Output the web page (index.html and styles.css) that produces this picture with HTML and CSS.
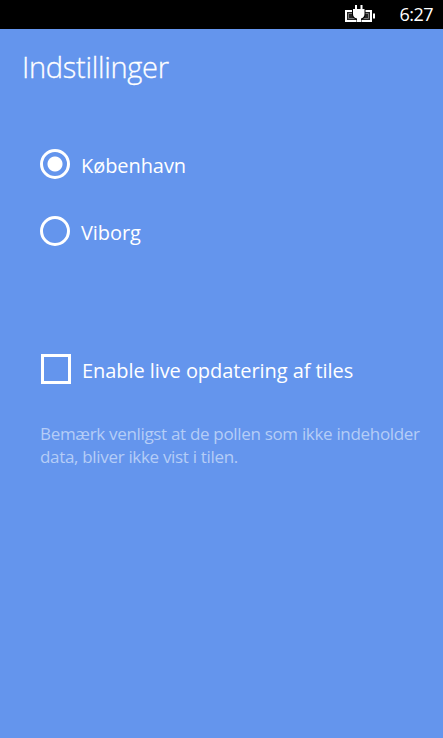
FILE: index.html
```html
<!DOCTYPE html>
<html lang="da">
<head>
    <meta charset="UTF-8">
    <meta name="viewport" content="width=device-width, initial-scale=1.0">
    <title>Indstillinger</title>
    <link rel="stylesheet" href="styles.css">
</head>
<body>

    <div class="status-bar">
        <!-- Battery, charging -->
        <svg class="battery" width="30" height="19" viewBox="0 0 30 19">
            <path d="M1 6h25v10H1z" fill="#222" stroke="#fff" stroke-width="2"/>
            <path d="M3.500 8.500h20v5h-20z" fill="none" stroke="#777" stroke-width="1"/>
            <path d="M28 8.500h2v5h-2z" fill="#fff"/>
            <path d="M7 4h13.500v5.500c0 3-2 4.500-4 5V18h-5v-3.500C9 14 7 12 7 9.500z" fill="#000"/>
            <path d="M10 0h2v4h3.500V0h2v4h2v5c0 2.500-1.500 4-3.500 4.500V17h-4v-3.500C9.500 13 8 11.500 8 9V4h2z" fill="#fff"/>
        </svg>
        <span class="clock">6:27</span>
    </div>

    <main class="settings">
        <h1>Indstillinger</h1>

        <div class="cities">
            <label class="option">
                <input type="radio" name="city" class="radio" checked>
                <span>København</span>
            </label>
            <label class="option">
                <input type="radio" name="city" class="radio">
                <span>Viborg</span>
            </label>
        </div>

        <label class="option live-tiles">
            <input type="checkbox" class="checkbox">
            <span>Enable live opdatering af tiles</span>
        </label>

        <p class="note">Bemærk venligst at de pollen som ikke indeholder<br>data, bliver ikke vist i tilen.</p>
    </main>

</body>
</html>
```
FILE: styles.css
```css
* {
    box-sizing: border-box;
}

body {
    margin: 0;
    height: 100vh;
    background-color: #6495ED;
    color: white;
    font-family: "Open Sans", "Noto Sans", sans-serif;
    overflow: hidden;
}

.status-bar {
    display: flex;
    justify-content: flex-end;
    align-items: center;
    height: 29px;
    padding-right: 10px;
    background-color: black;
}

.battery {
    margin-right: 24px;
}

.clock {
    font-size: 18px;
    line-height: 29px;
    letter-spacing: -0.5px;
}

.settings {
    padding: 18px 20px 0 22px;
}

h1 {
    margin: 0;
    font-size: 29px;
    font-weight: 300;
    line-height: 40px;
    letter-spacing: -0.3px;
    -webkit-text-stroke: 0.3px white;
}

.cities {
    display: flex;
    flex-direction: column;
    gap: 37px;
    margin-top: 62px;
}

.option {
    display: flex;
    align-items: center;
    gap: 11px;
    height: 30px;
    padding-left: 18px;
    font-size: 20px;
    line-height: 30px;
    letter-spacing: -0.07px;
}

.option span {
    padding-top: 3px;
}

.radio,
.checkbox {
    appearance: none;
    flex: none;
    width: 30px;
    height: 30px;
    margin: 0;
    border: 3px solid white;
}

.radio {
    border-radius: 50%;
}

.radio:checked {
    background: radial-gradient(circle, white 7px, transparent 8px);
}

.live-tiles {
    margin-top: 108px;
    padding-left: 19px;
}

.note {
    margin: 38px 0 0 18px;
    color: #B5CDF7;
    font-size: 17px;
    line-height: 23px;
    letter-spacing: -0.32px;
    white-space: nowrap;
}
```
